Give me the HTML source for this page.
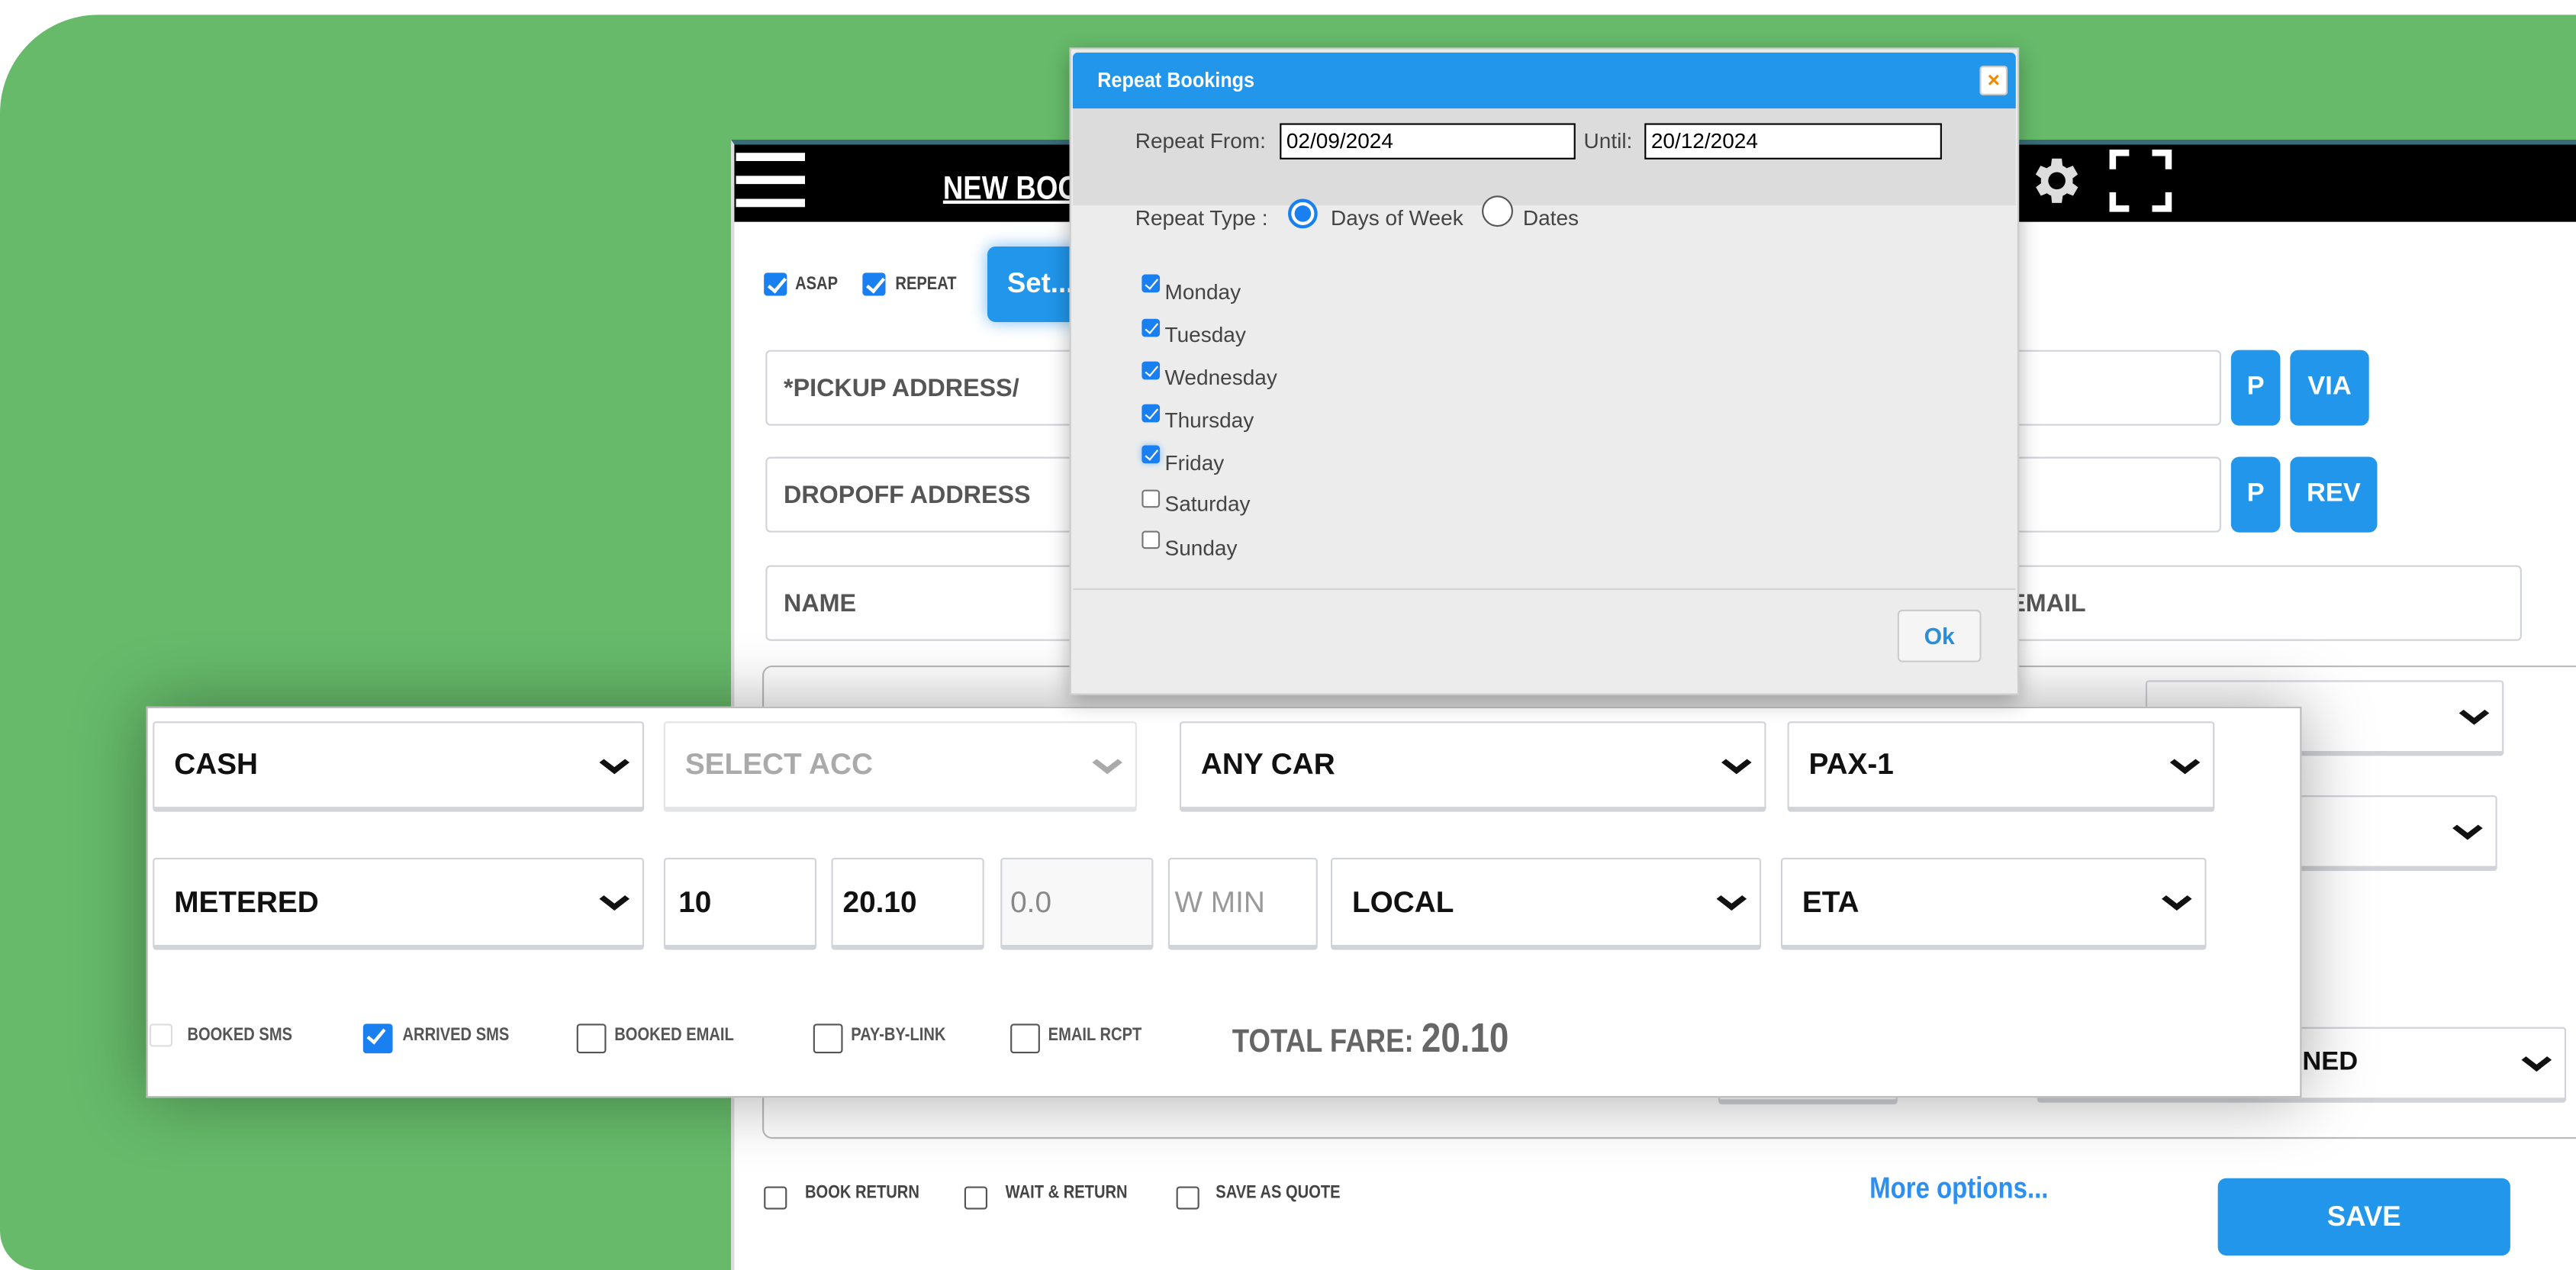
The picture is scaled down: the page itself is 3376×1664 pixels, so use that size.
<!DOCTYPE html>
<html><head><meta charset="utf-8"><style>
*{box-sizing:border-box;margin:0;padding:0}
html,body{width:3376px;height:1664px;overflow:hidden;background:#fff}
#w{position:absolute;left:0;top:0;width:1568px;height:773px;transform:scale(2.15306);transform-origin:0 0;font-family:"Liberation Sans",Arial,sans-serif}
.a{position:absolute}
.green{left:0;top:9px;width:1568px;height:764px;background:#66BA6A;border-radius:60px 0 0 24px}
.inp{position:absolute;background:#fff;border:1.5px solid #d0d3d8;border-radius:3px;color:#555;font-weight:bold;font-size:15px;padding-left:10px;display:flex;align-items:center}
.sel{position:absolute;background:#fff;border:1.5px solid #d0d3d8;border-bottom:3px solid #d0d3d8;border-radius:2px;color:#111;font-weight:bold;font-size:18px;padding-left:12px;display:flex;align-items:center}
.chev{position:absolute;right:12px;top:50%;width:10px;height:10px;border-right:3px solid #111;border-bottom:3px solid #111;transform:translateY(-70%) scaleX(1.3) rotate(45deg)}
.btn{position:absolute;background:#2196EA;color:#fff;font-weight:bold;border-radius:5px;display:flex;align-items:center;justify-content:center}
.cb{position:absolute;width:14px;height:14px;border:1.5px solid #555;border-radius:2px;background:#fff}
.cbc{background:#1a7ff0;border-color:#1a7ff0}
.cbc:after{content:"";position:absolute;left:4px;top:0px;width:4px;height:9px;border-right:2px solid #fff;border-bottom:2px solid #fff;transform:rotate(40deg)}
.sm{position:absolute;font-size:11px;color:#444;font-weight:bold;transform:scaleX(.85);transform-origin:0 0}
.dc{position:absolute;width:11px;height:11px;border:1px solid #777;border-radius:2px;background:#fff}
.dcc{background:#1a7ff0;border-color:#1a7ff0}
.dcc:after{content:"";position:absolute;left:3px;top:0;width:3px;height:7px;border-right:1.5px solid #fff;border-bottom:1.5px solid #fff;transform:rotate(40deg)}
.dl{position:absolute;font-size:13px;color:#444}
</style></head><body><div id="w">
<div class="a green"></div>

<div class="a" style="left:445px;top:85px;width:1123px;height:688px;background:#fff;border-top:3px solid #3a6b7a;border-left:2px solid #ddd"></div>
<div class="a" style="left:447px;top:88px;width:1121px;height:47px;background:#000"></div>
<div class="a" style="left:448px;top:93px;width:42px;height:5px;background:#fff"></div>
<div class="a" style="left:448px;top:107px;width:42px;height:5px;background:#fff"></div>
<div class="a" style="left:448px;top:121px;width:42px;height:5px;background:#fff"></div>
<div class="a" style="left:574px;top:104px;color:#fff;font-size:20px;text-decoration:underline;font-weight:bold;transform:scaleX(.85);transform-origin:0 0">NEW BOOKING</div>
<svg class="a" style="left:1234px;top:92px" width="36" height="36" viewBox="0 0 24 24"><path fill="#ddd" d="M19.4 13a7.5 7.5 0 000-2l2.1-1.6-2-3.5-2.5 1a7.4 7.4 0 00-1.7-1L15 3h-4l-.4 2.9a7.4 7.4 0 00-1.7 1l-2.5-1-2 3.5L6.6 11a7.5 7.5 0 000 2l-2.1 1.6 2 3.5 2.5-1a7.4 7.4 0 001.7 1L11 21h4l.4-2.9a7.4 7.4 0 001.7-1l2.5 1 2-3.5zM13 15.5a3.5 3.5 0 110-7 3.5 3.5 0 010 7z" transform="translate(-1 0)"/></svg>
<svg class="a" style="left:1284px;top:91px" width="38" height="38" viewBox="0 0 38 38" fill="none" stroke="#fff" stroke-width="4"><path d="M2 12V2h10M26 2h10v10M36 26v10H26M12 36H2V26"/></svg>

<div class="cb cbc" style="left:465px;top:166px"></div><div class="sm" style="left:484px;top:167px">ASAP</div>
<div class="cb cbc" style="left:525px;top:166px"></div><div class="sm" style="left:545px;top:167px">REPEAT</div>
<div class="btn" style="left:601px;top:150px;width:60px;height:46px;font-size:17px;box-shadow:0 0 10px #7bbcf5;justify-content:flex-start;padding-left:12px">Set...</div>

<div class="inp" style="left:466px;top:213px;width:886px;height:46px">*PICKUP ADDRESS/</div>
<div class="btn" style="left:1358px;top:213px;width:30px;height:46px;font-size:16px">P</div>
<div class="btn" style="left:1394px;top:213px;width:48px;height:46px;font-size:16px">VIA</div>
<div class="inp" style="left:466px;top:278px;width:886px;height:46px">DROPOFF ADDRESS</div>
<div class="btn" style="left:1358px;top:278px;width:30px;height:46px;font-size:16px">P</div>
<div class="btn" style="left:1394px;top:278px;width:53px;height:46px;font-size:16px">REV</div>
<div class="inp" style="left:466px;top:344px;width:1069px;height:46px">NAME<span style="position:absolute;left:756px">EMAIL</span></div>

<div class="a" style="left:464px;top:405px;width:1120px;height:288px;border:1.5px solid #bbb;border-radius:6px"></div>
<div class="sel" style="left:1306px;top:414px;width:218px;height:46px"><span class="chev"></span></div>
<div class="sel" style="left:1300px;top:484px;width:220px;height:46px"><span class="chev"></span></div>
<div class="sel" style="left:1046px;top:640px;width:109px;height:32px"></div>
<div class="sel" style="left:1240px;top:625px;width:322px;height:46px;padding-left:148px;font-size:16px">GNED<span class="chev"></span></div>

<div class="cb" style="left:465px;top:722px"></div><div class="sm" style="left:490px;top:720px">BOOK RETURN</div>
<div class="cb" style="left:587px;top:722px"></div><div class="sm" style="left:612px;top:720px">WAIT &amp; RETURN</div>
<div class="cb" style="left:716px;top:722px"></div><div class="sm" style="left:740px;top:720px">SAVE AS QUOTE</div>
<div class="a" style="left:1138px;top:713px;color:#2d8ff0;font-size:18px;font-weight:bold;transform:scaleX(.85);transform-origin:0 0">More options...</div>
<div class="btn" style="left:1350px;top:717px;width:178px;height:47px;font-size:17px">SAVE</div>

<div class="a" style="left:89px;top:430px;width:1312px;height:238px;background:#fff;border:1px solid #bbb;box-shadow:0 0 40px rgba(0,0,0,.35)"></div>
<div class="sel" style="left:93px;top:439px;width:299px;height:55px">CASH<span class="chev"></span></div>
<div class="sel" style="left:404px;top:439px;width:288px;height:55px;color:#aaa;border-color:#e2e4e8">SELECT ACC<span class="chev" style="border-color:#aaa"></span></div>
<div class="sel" style="left:718px;top:439px;width:357px;height:55px">ANY CAR<span class="chev"></span></div>
<div class="sel" style="left:1088px;top:439px;width:260px;height:55px">PAX-1<span class="chev"></span></div>
<div class="sel" style="left:93px;top:522px;width:299px;height:56px">METERED<span class="chev"></span></div>
<div class="sel" style="left:404px;top:522px;width:93px;height:56px;padding-left:8px">10</div>
<div class="sel" style="left:506px;top:522px;width:93px;height:56px;padding-left:6px">20.10</div>
<div class="sel" style="left:609px;top:522px;width:93px;height:56px;padding-left:5px;background:#f8f8f8;color:#888;font-weight:normal">0.0</div>
<div class="sel" style="left:711px;top:522px;width:91px;height:56px;padding-left:3px;color:#999;font-weight:normal">W MIN</div>
<div class="sel" style="left:810px;top:522px;width:262px;height:56px">LOCAL<span class="chev"></span></div>
<div class="sel" style="left:1084px;top:522px;width:259px;height:56px">ETA<span class="chev"></span></div>

<div class="cb" style="left:91px;top:623px;border-color:#ddd"></div><div class="sm" style="left:114px;top:624px;color:#555">BOOKED SMS</div>
<div class="cb cbc" style="left:221px;top:623px;height:18px;width:18px"></div><div class="sm" style="left:245px;top:624px;color:#555">ARRIVED SMS</div>
<div class="cb" style="left:351px;top:623px;height:18px;width:18px"></div><div class="sm" style="left:374px;top:624px;color:#555">BOOKED EMAIL</div>
<div class="cb" style="left:495px;top:623px;height:18px;width:18px"></div><div class="sm" style="left:518px;top:624px;color:#555">PAY-BY-LINK</div>
<div class="cb" style="left:615px;top:623px;height:18px;width:18px"></div><div class="sm" style="left:638px;top:624px;color:#555">EMAIL RCPT</div>
<div class="a" style="left:750px;top:618px;color:#666;font-size:20px;font-weight:bold;transform:scaleX(.85);transform-origin:0 0">TOTAL FARE: <span style="font-size:25px">20.10</span></div>

<div class="a" style="left:651px;top:29px;width:578px;height:394px;background:#ececec;border:1px solid #ccc;box-shadow:0 4px 12px rgba(0,0,0,.3)"></div>
<div class="a" style="left:653px;top:66px;width:574px;height:59px;background:#dcdcdc"></div>
<div class="a" style="left:653px;top:32px;width:574px;height:34px;background:#2196EA;border-radius:3px 3px 0 0"></div>
<div class="a" style="left:668px;top:41px;color:#fff;font-size:13px;font-weight:bold;transform:scaleX(.9);transform-origin:0 0">Repeat Bookings</div>
<div class="a" style="left:1205px;top:40px;width:17px;height:18px;background:#fff;border:1px solid #ccc;border-radius:2px;color:#f08a00;font-size:13px;font-weight:bold;text-align:center;line-height:15px">×</div>
<div class="dl" style="left:691px;top:78px">Repeat From:</div>
<div class="a" style="left:779px;top:75px;width:180px;height:22px;background:#fff;border:1.5px solid #000;font-size:13px;padding:2px 3px">02/09/2024</div>
<div class="dl" style="left:964px;top:78px">Until:</div>
<div class="a" style="left:1001px;top:75px;width:181px;height:22px;background:#fff;border:1.5px solid #000;font-size:13px;padding:2px 3px">20/12/2024</div>
<div class="dl" style="left:691px;top:125px">Repeat Type :</div>
<div class="a" style="left:784px;top:121px;width:18px;height:18px;border-radius:50%;border:2px solid #1a7ff0;background:#fff"><div style="margin:2px;width:10px;height:10px;border-radius:50%;background:#1a7ff0"></div></div>
<div class="dl" style="left:810px;top:125px">Days of Week</div>
<div class="a" style="left:902px;top:119px;width:19px;height:19px;border-radius:50%;border:1px solid #555;background:#fff"></div>
<div class="dl" style="left:927px;top:125px">Dates</div>
<div class="dc dcc" style="left:695px;top:167px"></div><div class="dl" style="left:709px;top:170px">Monday</div>
<div class="dc dcc" style="left:695px;top:194px"></div><div class="dl" style="left:709px;top:196px">Tuesday</div>
<div class="dc dcc" style="left:695px;top:220px"></div><div class="dl" style="left:709px;top:222px">Wednesday</div>
<div class="dc dcc" style="left:695px;top:246px"></div><div class="dl" style="left:709px;top:248px">Thursday</div>
<div class="dc dcc" style="left:695px;top:271px;box-shadow:0 0 4px #7bbcf5"></div><div class="dl" style="left:709px;top:274px">Friday</div>
<div class="dc" style="left:695px;top:298px"></div><div class="dl" style="left:709px;top:299px">Saturday</div>
<div class="dc" style="left:695px;top:323px"></div><div class="dl" style="left:709px;top:326px">Sunday</div>
<div class="a" style="left:653px;top:358px;width:574px;height:1px;background:#d4d4d4"></div>
<div class="a" style="left:1155px;top:371px;width:51px;height:32px;background:#f5f5f5;border:1px solid #ccc;border-radius:3px;color:#2a8fd8;font-size:14px;font-weight:bold;text-align:center;line-height:30px">Ok</div>
</div></body></html>
